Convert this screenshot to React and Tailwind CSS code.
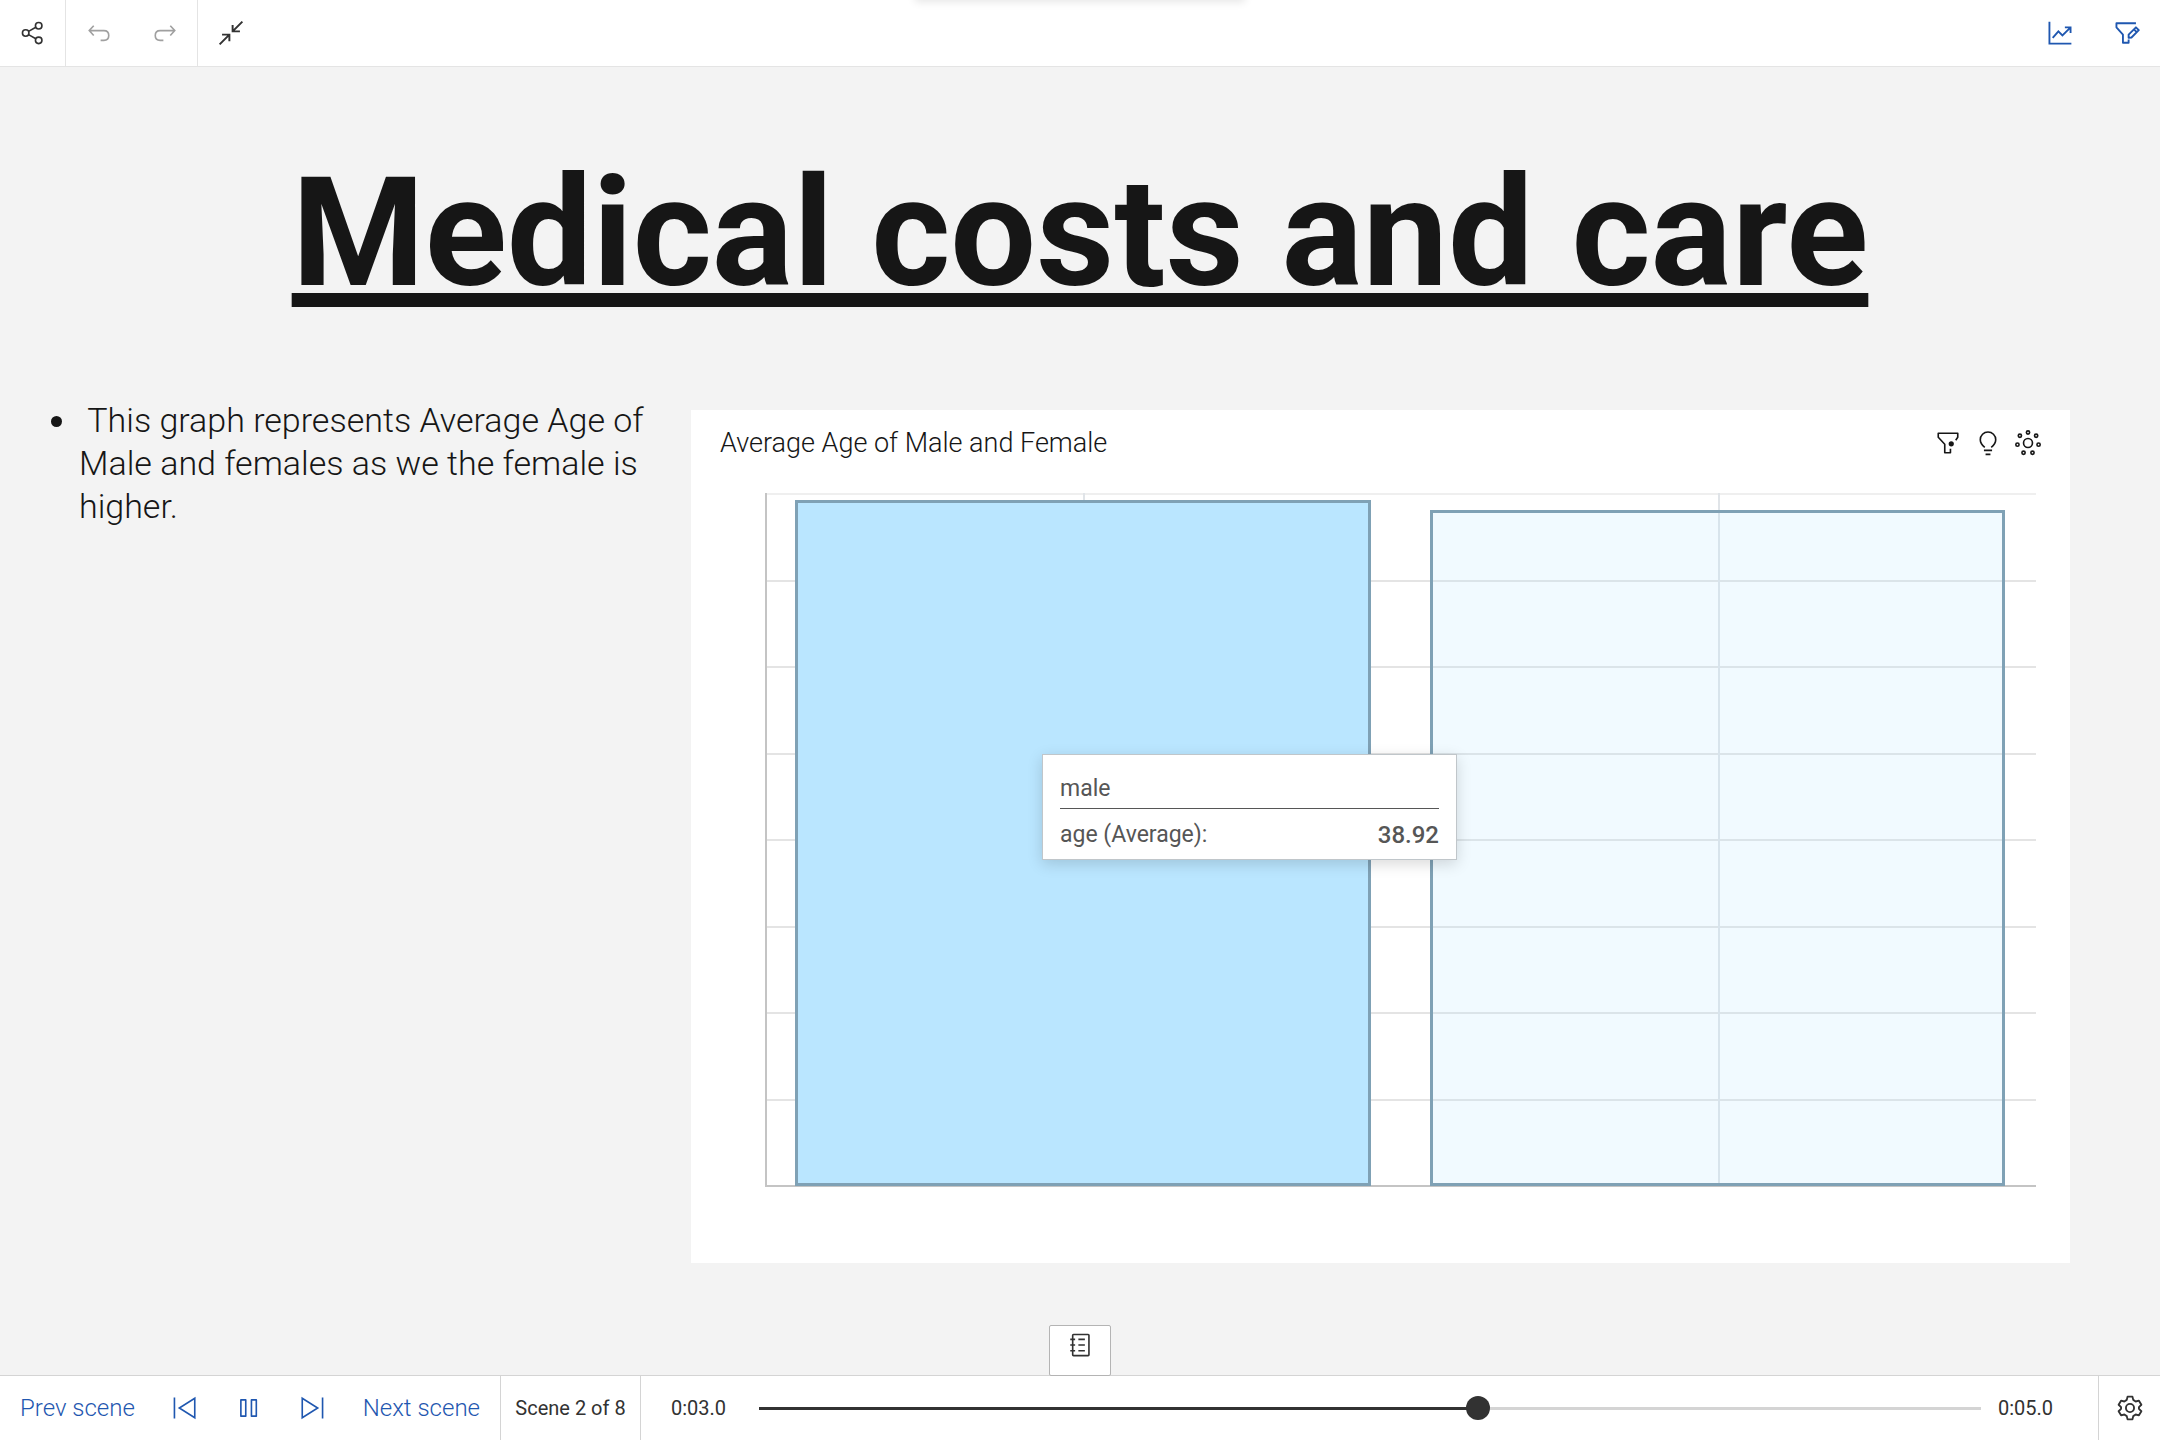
const NAV = "flex items-center justify-center cursor-pointer";

function Icon({ size = 24, children, ...rest }) {
  return (
    <svg width={size} height={size} viewBox="0 0 32 32" fill="none" stroke="currentColor" strokeWidth="2" aria-hidden="true" {...rest}>
      {children}
    </svg>
  );
}

const ShareIcon = () => (
  <Icon size={26}>
    <circle cx="7" cy="16" r="4" /><circle cx="23" cy="7" r="4" /><circle cx="23" cy="25" r="4" />
    <path d="M10.5 14 19.5 9M10.5 18l9 5" />
  </Icon>
);
const UndoIcon = () => (
  <Icon size={26}>
    <path d="M9.500 7 4 13l5.500 6M4 13h18q6 0 6 6t-6 6h-4" />
  </Icon>
);
const RedoIcon = () => (
  <Icon size={26}>
    <path d="M22.500 7 28 13l-5.500 6M28 13H10q-6 0-6 6t6 6h4" />
  </Icon>
);
const CollapseIcon = () => (
  <Icon size={26} strokeWidth="2.4">
    <path d="M30 2 18 14M18 6v8h9M2 30l12-12M5 18h9v8" />
  </Icon>
);
const TrendIcon = () => (
  <Icon size={26} strokeWidth="2.3">
    <path d="M3 2v27h27M7 22l7-8 5 5 10-10M22 9h7v7" />
  </Icon>
);
const FilterEditIcon = () => (
  <Icon size={26} strokeWidth="2.3" strokeLinejoin="round">
    <path d="M27 4H3v5l8 9v10h7v-4" />
    <path d="M18 22v-4l9-9 3.500 3.500-9 9ZM24.500 11.500l3.500 3.500" />
  </Icon>
);
const SkipBackIcon = () => (
  <Icon size={26}>
    <path d="M3 3v26M28 4v24L9 16Z" />
  </Icon>
);
const SkipNextIcon = () => (
  <Icon size={26}>
    <path d="M29 3v26M4 4v24l19-12Z" />
  </Icon>
);
const PauseIcon = () => (
  <Icon size={26} strokeLinejoin="round">
    <rect x="6" y="6" width="6" height="20" /><rect x="19" y="6" width="6" height="20" />
  </Icon>
);
const FunnelIcon = () => (
  <Icon size={26} strokeLinejoin="round">
    <path d="M25.500 12.500 28 9V4H4v5l8 8.500V28h7v-5" />
    <circle cx="20" cy="17" r="3.200" fill="currentColor" stroke="none" />
  </Icon>
);
const BulbIcon = () => (
  <Icon size={26}>
    <path d="M11 25h10M13 30h6M12 21.500C9 19 6.500 16.500 6.500 12a9.500 9.500 0 0 1 19 0c0 4.500-2.500 7-5.500 9.500" />
  </Icon>
);
const RING = [[16, 3], [26, 7], [29, 18], [21.5, 28], [10.5, 28], [3, 18], [6, 7]];
const RingIcon = () => (
  <Icon size={26}>
    <circle cx="16" cy="16" r="5.500" />
    {RING.map(([x, y]) => <circle key={x} cx={x} cy={y} r="2" />)}
  </Icon>
);
const NotesIcon = () => (
  <Icon size={26}>
    <rect x="7" y="3" width="20" height="26" rx="1" />
    <path d="M4 9h6M4 16h6M4 23h6M14 9h8M14 16h8M14 23h8" />
  </Icon>
);
const GearIcon = () => (
  <Icon size={26} strokeWidth="2.3" strokeLinejoin="round">
    <circle cx="16" cy="16" r="5" />
    <path d="M13 2h6l1 4 3 2 4-1 3 5-3 3v2l3 3-3 5-4-1-3 2-1 4h-6l-1-4-3-2-4 1-3-5 3-3v-2l-3-3 3-5 4 1 3-2Z" />
  </Icon>
);

function TopBar() {
  return (
    <header className="relative flex h-[67px] shrink-0 overflow-hidden border-b border-[#e4e4e4] bg-white text-[#323232]">
      <div className="absolute bottom-full left-1/2 h-4 w-[330px] -translate-x-1/2 shadow-[0_2px_8px_rgba(0,0,0,0.1)]" />
      <div className="flex border-r border-[#e4e4e4]">
        <button aria-label="Share" className={`${NAV} w-[65px]`}><ShareIcon /></button>
      </div>
      <div className="flex border-r border-[#e4e4e4] text-[#a0a0a0]">
        <button aria-label="Undo" className={`${NAV} w-[66px]`}><UndoIcon /></button>
        <button aria-label="Redo" className={`${NAV} w-[65px]`}><RedoIcon /></button>
      </div>
      <button aria-label="Exit full screen" className={`${NAV} w-[66px]`}><CollapseIcon /></button>
      <div className="ml-auto flex text-[#1f57b0]">
        <button aria-label="Visualizations" className={`${NAV} w-[68px]`}><TrendIcon /></button>
        <button aria-label="Filters" className={`${NAV} w-[66px]`}><FilterEditIcon /></button>
      </div>
    </header>
  );
}

const GRID_ROWS = [0, 1, 2, 3, 4, 5, 6, 7];
const BARS = [
  { name: "female", height: 99, fill: "bg-[#bae6ff]" },
  { name: "male", height: 97.6, fill: "bg-[#bae6ff]/20" },
];

function Tooltip() {
  return (
    <div role="tooltip" className="absolute top-[261px] left-[275px] w-[415px] border border-[#c0c6ca] bg-white px-[17px] pt-4 pb-[6px] text-[23px] leading-9 text-[#565656] shadow-[0_4px_14px_rgba(0,0,0,0.15)]">
      <div className="border-b border-[#565656] pb-px">male</div>
      <div className="flex justify-between pt-2">
        <span>age (Average):</span>
        <span className="text-2xl leading-9 font-medium">38.92</span>
      </div>
    </div>
  );
}

function ChartCard() {
  return (
    <section className="mt-[11px] flex min-w-0 flex-1 flex-col bg-white pr-[34px] pb-[76px] pl-[74px]">
      <div className="-mr-[5px] -ml-[45px] flex h-[83px] items-center justify-between pb-4 text-[#161616]">
        <h2 className="text-[27px] font-light">Average Age of Male and Female</h2>
        <div className="flex gap-[14px] pb-[2px]">
          <button aria-label="Filter"><FunnelIcon /></button>
          <button aria-label="Insights"><BulbIcon /></button>
          <button aria-label="Related"><RingIcon /></button>
        </div>
      </div>
      <div className="relative grid h-[694px] grid-cols-1 grid-rows-1 border-b-2 border-l-2 border-[#c4c4c4]">
        <div className="col-start-1 row-start-1 grid grid-rows-8">
          {GRID_ROWS.map((r) => <div key={r} className={r === 0 ? "border-t-2 border-[#efefef]" : "border-t-2 border-[#e4e4e4]"} />)}
        </div>
        <div className="col-start-1 row-start-1 -mb-px grid grid-cols-2">
          {BARS.map((b) => (
            <div key={b.name} className="grid grid-cols-1 grid-rows-1 items-end">
              <div className="col-start-1 row-start-1 h-full w-[2px] justify-self-center bg-[#e0e4e8]" />
              <div className={`col-start-1 row-start-1 mr-[31px] ml-[28px] border-3 border-[#7fa1b5] ${b.fill}`} style={{ height: `${b.height}%` }} />
            </div>
          ))}
        </div>
        <Tooltip />
      </div>
    </section>
  );
}

function Player() {
  return (
    <footer className="relative flex h-[65px] shrink-0 items-stretch border-t border-[#d4d4d4] bg-white text-[#1f57b0]">
      <button aria-label="Notes" className="absolute bottom-full left-1/2 flex h-[51px] w-[62px] -translate-x-1/2 justify-center rounded-xs border border-[#b4b4b4] bg-white pt-[6px] text-[#323232]">
        <NotesIcon />
      </button>
      <div className="flex w-[501px] items-center justify-between border-r border-[#d4d4d4] px-5 text-2xl font-light">
        <button>Prev scene</button>
        <button aria-label="Previous"><SkipBackIcon /></button>
        <button aria-label="Pause"><PauseIcon /></button>
        <button aria-label="Next"><SkipNextIcon /></button>
        <button>Next scene</button>
      </div>
      <div className="flex w-[140px] items-center justify-center border-r border-[#d4d4d4] text-xl text-[#323232]">Scene 2 of 8</div>
      <div className="flex flex-1 items-center pr-[42px] pl-[30px] text-xl text-[#323232]">
        <span className="w-[88px]">0:03.0</span>
        <div className="relative flex h-6 flex-1 items-center">
          <div className="h-[3px] w-[59%] bg-[#323232]" />
          <div className="h-[3px] flex-1 bg-[#d4d4d4]" />
          <input type="range" aria-label="Timeline" min="0" max="100" defaultValue="59" className="absolute inset-0 w-full cursor-pointer appearance-none bg-transparent [&::-webkit-slider-thumb]:size-6 [&::-webkit-slider-thumb]:appearance-none [&::-webkit-slider-thumb]:rounded-full [&::-webkit-slider-thumb]:bg-[#323232]" />
        </div>
        <span className="w-[75px] pl-[17px]">0:05.0</span>
      </div>
      <button aria-label="Settings" className={`${NAV} w-[62px] border-l border-[#d4d4d4] text-[#323232]`}><GearIcon /></button>
    </footer>
  );
}

export default function App() {
  return (
    <div className="flex min-h-screen flex-col bg-[#f3f3f3] font-['Roboto',sans-serif] text-[#161616]">
      <TopBar />
      <main className="flex-1">
        <h1 className="pt-[76px] text-center text-[152px] leading-[180px] font-bold underline decoration-[14px] underline-offset-[8px] [text-decoration-skip-ink:none]">Medical costs and care</h1>
        <div className="flex items-start pt-[76px] pr-[90px]">
          <ul className="w-[691px] shrink-0 list-disc pr-4 pl-[79px] text-[34px] leading-[43px] font-light">
            <li>&nbsp;This graph represents Average Age of Male and females as we the female is higher.</li>
          </ul>
          <ChartCard />
        </div>
      </main>
      <Player />
    </div>
  );
}
